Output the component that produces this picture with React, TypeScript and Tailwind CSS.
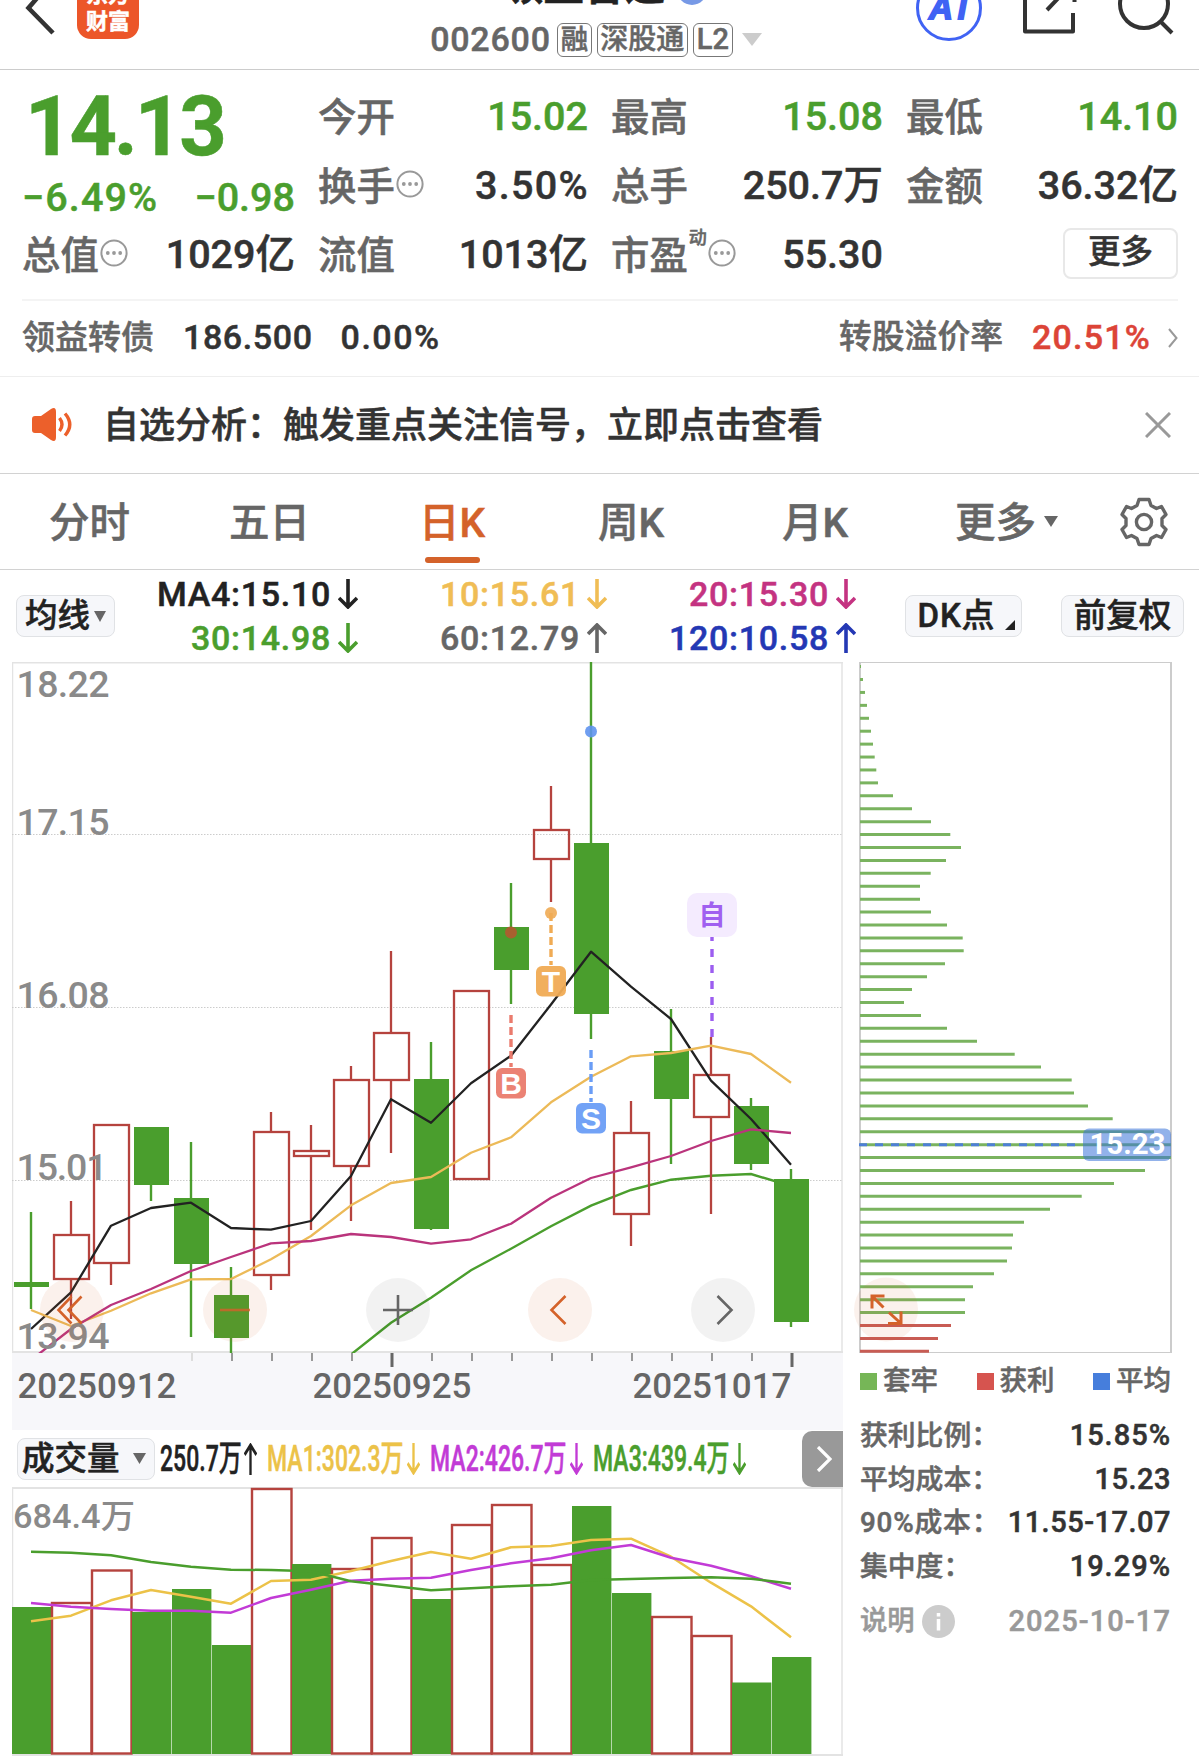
import type { ReactNode } from "react";
import clsx from "clsx";

const GREEN = "#4a9e2d";
const RED = "#b5433e";

type Candle = { up: boolean; high: number; top: number; bottom: number; low: number };

// y values of the price pane, one candle every 40px
const candles: Candle[] = [
  { up: false, high: 1212, top: 1282, bottom: 1287, low: 1309 },
  { up: true, high: 1201, top: 1235, bottom: 1279, low: 1319 },
  { up: true, high: 1124, top: 1125, bottom: 1263, low: 1285 },
  { up: false, high: 1127, top: 1127, bottom: 1185, low: 1201 },
  { up: false, high: 1142, top: 1198, bottom: 1264, low: 1337 },
  { up: false, high: 1267, top: 1295, bottom: 1338, low: 1353 },
  { up: true, high: 1112, top: 1132, bottom: 1275, low: 1290 },
  { up: true, high: 1125, top: 1151, bottom: 1156, low: 1230 },
  { up: true, high: 1066, top: 1080, bottom: 1166, low: 1221 },
  { up: true, high: 951, top: 1033, bottom: 1080, low: 1153 },
  { up: false, high: 1042, top: 1079, bottom: 1229, low: 1230 },
  { up: true, high: 991, top: 991, bottom: 1179, low: 1179 },
  { up: false, high: 883, top: 927, bottom: 970, low: 1004 },
  { up: true, high: 786, top: 830, bottom: 859, low: 902 },
  { up: false, high: 662, top: 843, bottom: 1014, low: 1039 },
  { up: true, high: 1101, top: 1133, bottom: 1214, low: 1246 },
  { up: false, high: 1009, top: 1051, bottom: 1099, low: 1164 },
  { up: true, high: 1037, top: 1075, bottom: 1117, low: 1214 },
  { up: false, high: 1098, top: 1106, bottom: 1164, low: 1170 },
  { up: false, high: 1169, top: 1179, bottom: 1322, low: 1327 },
];

const ma4 = [1329, 1292.3, 1225.7, 1208, 1202.7, 1228, 1229.7, 1221, 1176, 1099.3, 1122.7, 1083.3, 1055.7, 1004.5, 951.7, 986.7, 1019, 1080.7, 1119, 1164.7];
const ma10 = [1310, 1326, 1310.7, 1293.3, 1279.3, 1279, 1259.3, 1236, 1205.3, 1183, 1177, 1152.7, 1137.3, 1102.3, 1076.7, 1056.3, 1053, 1045.7, 1054, 1082.7];
const ma20 = [1360, 1329, 1305, 1289, 1271, 1257, 1243.3, 1241, 1234, 1237, 1243.7, 1239.3, 1223.7, 1197.7, 1178, 1167.3, 1156, 1141, 1129.3, 1133];
const ma30 = [1354.5, 1322.7, 1297.7, 1270.3, 1248.7, 1226.3, 1205.7, 1190, 1179.7, 1175.7, 1174, 1186];

const volumes = [
  { up: false, y: 1607 }, { up: true, y: 1603 }, { up: true, y: 1570.5 }, { up: false, y: 1612 },
  { up: false, y: 1589 }, { up: false, y: 1645 }, { up: true, y: 1489 }, { up: false, y: 1564 },
  { up: true, y: 1569 }, { up: true, y: 1538 }, { up: false, y: 1599 }, { up: true, y: 1525 },
  { up: true, y: 1505 }, { up: true, y: 1565 }, { up: false, y: 1506 }, { up: false, y: 1593 },
  { up: true, y: 1617 }, { up: true, y: 1636 }, { up: false, y: 1682.5 }, { up: false, y: 1657 },
];
const vol1 = [1621.3, 1615.7, 1600.3, 1590, 1596.7, 1603.7, 1581, 1579.7, 1571, 1561, 1552, 1558.7, 1547.3, 1546, 1540, 1538.7, 1556.7, 1582.7, 1606.3, 1637.3];
const vol2 = [1603, 1606.7, 1609, 1610.7, 1610.7, 1612.7, 1598, 1589.7, 1580.7, 1578.7, 1577.7, 1570, 1563.3, 1558.3, 1550.3, 1545, 1557.7, 1565.7, 1576.3, 1588.7];
const vol3 = [1551.7, 1552.7, 1555.3, 1562, 1566.7, 1569.7, 1570, 1571.3, 1581.3, 1585.7, 1590.3, 1588.3, 1586.3, 1584.7, 1580, 1579, 1578, 1577.3, 1578.7, 1583.7];

// right ends of the chip distribution lines, top to bottom
const chips = [
  861, 863, 865, 867, 869, 871, 873, 874.7, 876.3, 878, 893, 912, 931, 950.3, 961, 946, 930.7, 920,
  920, 931, 947, 962.7, 963.7, 945, 927, 912, 904, 921, 947, 977, 1014.7, 1041, 1071.7, 1074, 1088,
  1112.7, 1154, 1171, 1171, 1145, 1114, 1081.7, 1050, 1024, 1013, 1012, 1007, 994, 973, 965, 965, 951, 938, 929,
];

const points = (ys: number[], first = 0) => ys.map((y, i) => `${31 + 40 * (first + i)},${y}`).join(" ");

function Arrow({ up = false, className = "w-5 h-[30px]" }: { up?: boolean; className?: string }) {
  return (
    <svg viewBox="0 0 20 30" preserveAspectRatio="none" className={className} fill="none" stroke="currentColor" strokeWidth="3.6">
      <path d={up ? "M10 30V2M1 11L10 2L19 11" : "M10 0V28M1 19L10 28L19 19"} />
    </svg>
  );
}

function Triangle({ className }: { className: string }) {
  return (
    <svg viewBox="0 0 12 10" preserveAspectRatio="none" className={className} fill="currentColor">
      <path d="M0 0H12L6 10Z" />
    </svg>
  );
}

function Dots() {
  return (
    <svg viewBox="0 0 28 28" className="w-7 h-7 -mt-1 shrink-0" fill="none" stroke="#999" strokeWidth="2">
      <circle cx="14" cy="14" r="12.6" />
      <g fill="#999" stroke="none">
        <circle cx="7.8" cy="14" r="1.9" />
        <circle cx="14" cy="14" r="1.9" />
        <circle cx="20.2" cy="14" r="1.9" />
      </g>
    </svg>
  );
}

function Header() {
  return (
    <header className="flex justify-between h-[70px] overflow-hidden border-b border-[#ccc]">
      <div className="flex w-[300px] pl-[24px]">
        <svg width="32" height="36" viewBox="24 0 32 36" fill="none" stroke="#333" strokeWidth="4.6">
          <path d="M44 -10L28.5 8L53 33" />
        </svg>
        <div className="flex items-center justify-center w-[62px] h-[62px] -mt-[23px] ml-[21px] rounded-[14px] bg-[#ec5629] text-white text-[22px] leading-[27px] font-bold">
          <span>东方<br />财富</span>
        </div>
      </div>
      <div className="flex flex-col items-center w-[600px]">
        <div className="flex items-center h-12 -mt-[38px] ml-[10px] text-[40.5px] leading-[48px] font-bold text-[#222]">
          领益智造
          <span className="w-[30px] h-[30px] mt-[7px] ml-3 rounded-full bg-[#7799e6]" />
        </div>
        <div className="flex items-center h-[60px] mr-[8px] text-[#666]">
          <span className="text-[34px] tracking-[0.8px]">002600</span>
          <span className="flex items-center justify-center w-[35px] h-[34px] ml-[6px] text-[27.5px] border border-[#777] rounded-md">融</span>
          <span className="flex items-center justify-center w-[91px] h-[34px] ml-[5px] text-[28px] border border-[#777] rounded-md">深股通</span>
          <span className="flex items-center justify-center w-[40px] h-[34px] ml-[5px] text-[29px] border border-[#777] rounded-md">L2</span>
          <Triangle className="w-5 h-[13px] ml-[9px] text-[#ccc]" />
        </div>
      </div>
      <svg width="299" height="69" viewBox="900 0 299 69" fill="none" stroke="#333" strokeWidth="4">
        <circle cx="949" cy="8" r="31.5" stroke="#4063f4" strokeWidth="3" />
        <text x="929" y="19" fill="#4063f4" stroke="#4063f4" strokeWidth="1.8" fontSize="33" fontWeight="700" fontStyle="italic" fontFamily="Liberation Sans, sans-serif" textLength="38">Ai</text>
        <path d="M1025 -8V31.5H1073V13M1047 10L1066 -10M1074.5 -5V2" strokeLinejoin="round" />
        <circle cx="1144" cy="4" r="24" />
        <path d="M1160 21L1172 33" />
      </svg>
    </header>
  );
}

function Stat({ label, value, green = false, extra }: { label: string; value: string; green?: boolean; extra?: ReactNode }) {
  return (
    <div className="flex items-center justify-between">
      <div className="flex items-center pt-[2px] text-[38.4px] text-[#666] gap-[1px]">
        {label}
        {extra}
      </div>
      <span
        className={clsx(
          "text-[39.5px]",
          green ? "text-[#4a9e2d]" : "text-[#333]",
          value.endsWith("%") && "tracking-[1.3px] -mr-px",
        )}
      >
        {value}
      </span>
    </div>
  );
}

function Quote() {
  return (
    <section className="pl-[22px] pr-[21px]">
      <div className="grid grid-cols-[273px_270px_272px_272px] grid-rows-[69px_69px_69px] gap-x-[23px] pt-[12px] h-[229px]">
        <div className="row-span-2 text-[#4a9e2d]">
          <div className="h-[90px] pl-[3px] text-[83px] leading-[90px] font-bold tracking-[-3.2px]">14.13</div>
          <div className="flex justify-between h-[51px] leading-[51px] text-[39.5px]">
            <span className="tracking-[1.1px]">−6.49%</span>
            <span>−0.98</span>
          </div>
        </div>
        <Stat label="今开" value="15.02" green />
        <Stat label="最高" value="15.08" green />
        <Stat label="最低" value="14.10" green />
        <Stat label="换手" value="3.50%" extra={<Dots />} />
        <Stat label="总手" value="250.7万" />
        <Stat label="金额" value="36.32亿" />
        <Stat label="总值" value="1029亿" extra={<Dots />} />
        <Stat label="流值" value="1013亿" />
        <Stat label="市盈" value="55.30" extra={<><span className="text-[18px] -mt-9">动</span><Dots /></>} />
        <div className="flex items-center justify-end">
          <button className="w-[115px] h-[51px] -mt-[3px] pb-[3px] border-2 border-[#e8e8e8] rounded-lg text-[32.5px] leading-[44px] text-[#333]">更多</button>
        </div>
      </div>
      <div className="flex items-center h-[77px] pb-[2px] border-t-2 border-[#f4f4f4] text-[34px] text-[#333]">
        <span className="pt-px text-[33px] text-[#666]">领益转债</span>
        <span className="ml-[29px] tracking-[0.6px]">186.500</span>
        <span className="ml-[28px] tracking-[1.5px]">0.00%</span>
        <span className="ml-auto pt-px text-[32.8px] text-[#666]">转股溢价率</span>
        <span className="ml-[29px] text-[#dc4437] tracking-[1.2px]">20.51%</span>
        <svg viewBox="0 0 10 20" className="w-[10px] h-5 ml-[17px]" fill="none" stroke="#999" strokeWidth="2">
          <path d="M1 1L8.5 10L1 19" />
        </svg>
      </div>
    </section>
  );
}

function Notice() {
  return (
    <section className="flex items-center h-[98px] pl-8 pr-[28px] pb-px border-y border-t-[#eee] border-b-[#d2d2d2]">
      <svg width="40" height="33" viewBox="0 0 40 33" fill="#ec602b">
        <path d="M3 8H9L19 1Q24 -2 24 4V29Q24 35 19 32L9 25H3Q0 25 0 22V11Q0 8 3 8Z" />
        <path d="M27.5 10Q32.5 16.5 27.5 23M33 5.5Q42.5 16.5 33 27.5" fill="none" stroke="#ec602b" strokeWidth="3.4" />
      </svg>
      <span className="ml-[31px] pt-[3px] text-[36px] text-[#333]">自选分析：触发重点关注信号，立即点击查看</span>
      <svg width="26" height="26" viewBox="0 0 26 26" className="ml-auto" stroke="#999" strokeWidth="3">
        <path d="M1 1L25 25M25 1L1 25" />
      </svg>
    </section>
  );
}

function Tabs() {
  return (
    <nav className="flex items-center h-[96px] pl-[49px] pr-[30px] border-b border-[#d2d2d2] text-[40.5px] text-[#666]">
      <span className="w-[180px] pt-[4px]">分时</span>
      <span className="w-[190px] pt-[4px]">五日</span>
      <span className="relative w-[179px] pt-[4px] text-[#d4622a]">
        日K
        <span className="absolute left-[6px] -bottom-[9px] w-[55px] h-[6px] rounded-full bg-[#d4622a]" />
      </span>
      <span className="w-[184px] pt-[4px]">周K</span>
      <span className="w-[173px] pt-[4px]">月K</span>
      <span className="pt-[4px]">更多</span>
      <Triangle className="w-[14px] h-[11px] ml-[8px]" />
      <svg width="50" height="52" viewBox="-25 -26 50 52" className="ml-auto" fill="none" stroke="#666" strokeWidth="3.4" strokeLinejoin="round">
        <path d="M-5 -22.5H5L7 -16.5L12.5 -13.5L17.5 -15.5L22 -7.5L18 -3.5V3.5L22 7.5L17.5 15.5L12.5 13.5L7 16.5L5 22.5H-5L-7 16.5L-12.5 13.5L-17.5 15.5L-22 7.5L-18 3.5V-3.5L-22 -7.5L-17.5 -15.5L-12.5 -13.5L-7 -16.5Z" />
        <circle r="7.6" />
      </svg>
    </nav>
  );
}

function Ma({ text, up = false, className }: { text: string; up?: boolean; className: string }) {
  return (
    <div className={clsx("flex items-center justify-end gap-[7px] h-11", className)}>
      {text}
      <Arrow up={up} />
    </div>
  );
}

function MaBar() {
  return (
    <section className="flex items-center h-[92px] pl-4 text-[#222]">
      <button className="flex items-center justify-center w-[99px] h-[42px] rounded-lg border border-[#e0e2e5] bg-[#f6f7fa] text-[32.5px]">
        均线
        <Triangle className="w-[12px] h-[11px] ml-1 text-[#666]" />
      </button>
      <div className="grid grid-cols-[243px_249px_249px] text-[34px] tracking-[0.7px]">
        <Ma text="MA4:15.10" className="text-[#222]" />
        <Ma text="10:15.61" className="text-[#f0bd55]" />
        <Ma text="20:15.30" className="text-[#c43381]" />
        <Ma text="30:14.98" className="text-[#4a9e2d]" />
        <Ma text="60:12.79" up className="text-[#666]" />
        <Ma text="120:10.58" up className="text-[#2438b4]" />
      </div>
      <button className="relative w-[117px] h-[42px] ml-[49px] pr-[14px] rounded-lg border border-[#e0e2e5] bg-[#f6f7fa] text-[33px] leading-[38px] tracking-[0.8px] whitespace-nowrap">
        DK点
        <svg viewBox="0 0 10 10" className="absolute right-[6px] bottom-[6px] w-[10px] h-[10px]">
          <path d="M10 0V10H0Z" fill="#222" />
        </svg>
      </button>
      <button className="w-[123px] h-[42px] ml-[39px] rounded-lg border border-[#e0e2e5] bg-[#f6f7fa] text-[32.5px] leading-[38px]">前复权</button>
    </section>
  );
}

function Signal({ x, y, dot, from, color, label }: { x: number; y: number; dot?: number; from: number; color: string; label: string }) {
  return (
    <g>
      {dot && <circle cx={x} cy={dot} r="6" fill={color} fillOpacity="0.9" />}
      <path d={`M${x} ${from}V${y}`} stroke={color} strokeWidth="3.4" strokeDasharray="8 4" />
      <rect x={x - 15} y={y + 1} width="30" height="30.5" rx="6" fill={color} fillOpacity="0.95" />
      <text x={x} y={y + 27} fill="#fff" fontSize="30" fontWeight="700" textAnchor="middle" fontFamily="Liberation Sans, sans-serif">{label}</text>
    </g>
  );
}

function PriceChart() {
  return (
    <svg width="831" height="691" viewBox="12 662 831 691" fill="none" className="block">
      <path d="M12.5 662V1353M842 662V1353" stroke="#e3e3e3" strokeWidth="1.5" />
      <path d="M12 662.5H843M12 1352H843" stroke="#e3e3e3" strokeWidth="2" />
      <path d="M12 834.5H843M12 1007.5H843M12 1180.5H843" stroke="#ccc" strokeDasharray="1.5 1.5" />
      {/* MA30 runs behind the candles */}
      <polyline points={points(ma30, 8)} stroke={GREEN} strokeWidth="2.4" />
      {candles.map((c, i) => {
        const x = 31 + 40 * i;
        return c.up ? (
          <g key={i} stroke={RED} strokeWidth="2.3">
            <path d={`M${x} ${c.high}V${c.top}M${x} ${c.bottom}V${c.low}`} />
            <rect x={x - 17} y={c.top} width="35" height={c.bottom - c.top} />
          </g>
        ) : (
          <g key={i}>
            <path d={`M${x} ${c.high}V${c.low}`} stroke={GREEN} strokeWidth="2.4" />
            <rect x={x - 17} y={c.top} width="35" height={c.bottom - c.top} fill={GREEN} />
          </g>
        );
      })}
      <g strokeWidth="2.3" strokeLinejoin="round">
        <polyline points={points(ma4)} stroke="#222" />
        <polyline points={points(ma10)} stroke="#ecba58" />
        <polyline points={points(ma20)} stroke="#ba347c" />
      </g>

      <g fill="#8a8a8a" fontSize="37.5" fontWeight="500">
        <text x="16.5" y="697" textLength="93">18.22</text>
        <text x="16.5" y="834.5" textLength="93">17.15</text>
        <text x="16.5" y="1007.5" textLength="93">16.08</text>
        <text x="16.5" y="1179.5" textLength="91">15.01</text>
        <text x="16.5" y="1348.5" textLength="93">13.94</text>
      </g>

      <circle cx="511" cy="932.5" r="6" fill="#a9602f" />
      <Signal x={511} y={1067} from={1015} color="#ea7b6d" label="B" />
      <Signal x={551} y={965} dot={913} from={913} color="#f0ab54" label="T" />
      <circle cx="591" cy="731.5" r="6" fill="#5f94ee" fillOpacity="0.9" />
      <Signal x={591} y={1102} from={1050} color="#6a9df6" label="S" />
      <rect x="687" y="893" width="50" height="44" rx="10" fill="#f4ebfe" />
      <text x="712" y="924.5" fill="#a060f0" fontSize="27" fontWeight="700" textAnchor="middle">自</text>
      <path d="M712 937V1037" stroke="#9c5df0" strokeWidth="3.4" strokeDasharray="8 8" strokeDashoffset="4" />

      {/* Floating pan and zoom controls */}
      <g fill="#d4622a" fillOpacity="0.09">
        <circle cx="72" cy="1310" r="32" />
        <circle cx="235" cy="1310" r="32" />
        <circle cx="560" cy="1310" r="32" />
      </g>
      <g fill="#000" fillOpacity="0.05">
        <circle cx="398" cy="1310" r="32" />
        <circle cx="723" cy="1310" r="32" />
      </g>
      <g stroke="#d4622a" strokeWidth="2.6">
        <path d="M71.5 1296.5L58.5 1310L71.5 1323.5M81.5 1296.5L68.5 1310L81.5 1323.5" />
        <path d="M220 1310H250" strokeOpacity="0.8" />
        <path d="M565.5 1296L551.5 1310L565.5 1324" />
      </g>
      <g stroke="#666" strokeWidth="2.6">
        <path d="M383 1310H413M398 1295V1325" />
        <path d="M717.5 1296L731.5 1310L717.5 1324" />
      </g>
    </svg>
  );
}

function DateAxis() {
  const ticks = Array.from({ length: 16 }, (_, i) => 192 + 40 * i);
  return (
    <svg width="831" height="77" viewBox="12 1353 831 77" className="block bg-[#f7f7fa]">
      {ticks.map((x, i) => {
        const major = i === 5 || i === 15;
        return <path key={x} d={`M${x} 1353V${major ? 1367 : 1361}`} stroke={i === 0 ? "#ddd" : major ? "#666" : "#999"} strokeWidth={major ? 3 : 2} />;
      })}
      <g fill="#666" fontSize="35" fontWeight="500">
        <text x="17.5" y="1398" textLength="159">20250912</text>
        <text x="312.5" y="1398" textLength="159">20250925</text>
        <text x="632.5" y="1398" textLength="159">20251017</text>
      </g>
    </svg>
  );
}

function VolumeItem({ text, up = false, className, inner }: { text: string; up?: boolean; className: string; inner: string }) {
  return (
    <span className={clsx("flex items-center", className)}>
      <span className={inner}>
        <span className="inline-block origin-left scale-x-[0.64] whitespace-nowrap">{text}</span>
      </span>
      <Arrow up={up} className="w-[13px] h-8" />
    </span>
  );
}

function VolumeBar() {
  return (
    <div className="flex items-center h-[57px] pl-[5px] text-[36px]">
      <button className="flex items-center w-[138px] h-[42px] mr-[5px] pl-1 rounded-lg border border-[#e0e2e5] bg-[#f6f7fa] text-[32.5px] text-[#222]">
        <span className="pt-[2px]">成交量</span>
        <Triangle className="w-[13px] h-[11px] ml-[13px] text-[#666]" />
      </button>
      <VolumeItem text="250.7万" up className="mr-[10px] text-[#222]" inner="w-[84px]" />
      <VolumeItem text="MA1:302.3万" className="mr-[10px] text-[#ecc248]" inner="w-[140px]" />
      <VolumeItem text="MA2:426.7万" className="mr-[10px] text-[#c23bd6]" inner="w-[140px]" />
      <VolumeItem text="MA3:439.4万" className="text-[#4a9e2d]" inner="w-[140px]" />
      <div className="flex items-center justify-center w-[41px] h-[56px] mt-[1px] ml-auto rounded-l-[10px] bg-[#999]">
        <svg width="16" height="26" viewBox="0 0 16 26" className="ml-[3px]" fill="none" stroke="#fff" strokeWidth="3.2">
          <path d="M2 1L14 13L2 25" />
        </svg>
      </div>
    </div>
  );
}

function VolumeChart() {
  return (
    <svg width="831" height="269" viewBox="12 1487 831 269" fill="none" className="block">
      <path d="M12.5 1487V1755M842 1487V1755" stroke="#e3e3e3" strokeWidth="1.5" />
      <path d="M12 1488H843M12 1755H843" stroke="#e3e3e3" strokeWidth="2" />
      <text x="13" y="1527.5" fill="#8a8a8a" fontSize="32.5" fontWeight="500" textLength="122" lengthAdjust="spacingAndGlyphs">684.4万</text>
      {volumes.map((v, i) =>
        v.up ? (
          <rect key={i} x={12 + 40 * i} y={v.y} width="39.5" height={1753.5 - v.y} stroke={RED} strokeWidth="2.4" />
        ) : (
          <rect key={i} x={12 + 40 * i} y={v.y} width="39.4" height={1754 - v.y} fill={GREEN} />
        ),
      )}
      <g strokeWidth="2.5" strokeLinejoin="round">
        <polyline points={points(vol1)} stroke="#ecc248" />
        <polyline points={points(vol2)} stroke="#c23bd6" />
        <polyline points={points(vol3)} stroke={GREEN} />
      </g>
    </svg>
  );
}

function ChipChart() {
  return (
    <svg width="340" height="692" viewBox="853 662 340 692" fill="none" className="block -ml-[6px]">
      <path d="M860 662V1353M1171 662V1353" stroke="#ccc" strokeWidth="2" />
      <path d="M859 662.5H1172M859 1352.5H1172" stroke="#ccc" />
      {chips.map((x, i) => (
        <path key={i} d={`M860 ${(666.6 + i * 12.92).toFixed(2)}H${x}`} stroke={i > 50 ? "#c85c54" : "#7ab35f"} strokeWidth="3" />
      ))}
      <path d="M859 1144.7H1076" stroke="#4e7fd6" strokeWidth="3" strokeDasharray="8 8" />
      <rect x="1083" y="1128.5" width="88" height="32.5" rx="6" fill="#3873d9" fillOpacity="0.55" />
      <text x="1089.5" y="1154" fill="#fff" fontSize="29.5" fontWeight="700" textLength="76">15.23</text>
      <circle cx="886" cy="1309.5" r="32" fill="#d4622a" fillOpacity="0.09" />
      <path d="M884.5 1296H872V1308.5M872 1296L883.5 1307.5M888 1323.5H901V1311.5M901 1323.5L889 1312.5" stroke="#d4622a" strokeWidth="3" />
    </svg>
  );
}

function Legend({ text, className }: { text: string; className: string }) {
  return (
    <span className="flex items-center gap-[6px]">
      <span className={clsx("w-[17px] h-[17px] mt-[2px]", className)} />
      <span className="pt-px">{text}</span>
    </span>
  );
}

function ChipRow({ label, value }: { label: string; value: string }) {
  return (
    <div className="flex items-center justify-between h-[43.7px]">
      <span className={clsx("text-[27.8px] text-[#666]", label.includes("%") && "tracking-[0.8px]")}>{label}</span>
      <span className={clsx("text-[29px] text-[#333]", value.endsWith("%") ? "tracking-[1px]" : "tracking-[0.5px]")}>{value}</span>
    </div>
  );
}

function ChipPanel() {
  return (
    <aside className="w-[312px] ml-4">
      <ChipChart />
      <div className="flex items-center justify-between h-[53px] pl-px text-[27.5px] text-[#666]">
        <Legend text="套牢" className="bg-[#76b657]" />
        <Legend text="获利" className="bg-[#d6544f]" />
        <Legend text="平均" className="bg-[#467edc]" />
      </div>
      <div className="pt-[7px] pl-px">
        <ChipRow label="获利比例：" value="15.85%" />
        <ChipRow label="平均成本：" value="15.23" />
        <ChipRow label="90%成本：" value="11.55-17.07" />
        <ChipRow label="集中度：" value="19.29%" />
      </div>
      <div className="flex items-center h-[66px] pl-px text-[#999]">
        <span className="text-[27.3px]">说明</span>
        <svg width="33" height="33" viewBox="0 0 33 33" className="ml-[7px]">
          <circle cx="16.5" cy="16.5" r="16.5" fill="#ccc" />
          <path d="M16.5 8V11.5M16.5 14V25.5" stroke="#fff" strokeWidth="3.5" />
        </svg>
        <span className="ml-auto text-[29px] tracking-[1.1px]">2025-10-17</span>
      </div>
    </aside>
  );
}

export default function App() {
  return (
    <div className="w-[1199px] h-[1764px] overflow-hidden bg-white font-medium font-[Roboto,'Noto_Sans_CJK_SC',sans-serif] [-webkit-text-stroke:0.5px]">
      <Header />
      <Quote />
      <Notice />
      <Tabs />
      <MaBar />
      <main className="flex pl-3">
        <div className="w-[831px]">
          <PriceChart />
          <DateAxis />
          <VolumeBar />
          <VolumeChart />
        </div>
        <ChipPanel />
      </main>
    </div>
  );
}
